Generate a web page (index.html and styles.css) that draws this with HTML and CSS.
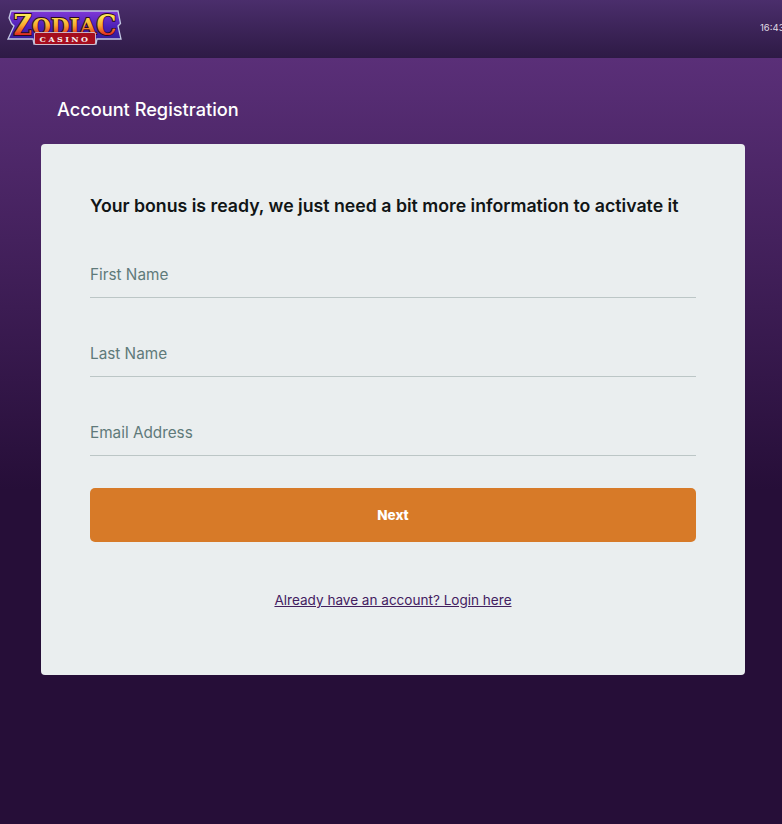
FILE: index.html
```html
<!DOCTYPE html>
<html lang="en">
<head>
    <meta charset="UTF-8">
    <meta name="viewport" content="width=device-width, initial-scale=1.0">
    <title>Account Registration</title>
    <link rel="stylesheet" href="styles.css">
</head>
<body>

    <header class="topbar">
        <svg class="logo" width="116" height="38" viewBox="0 0 116 38" aria-label="Zodiac Casino">
            <defs>
                <linearGradient id="gold" x1="0" y1="0" x2="0" y2="1">
                    <stop offset="0.2" stop-color="#fbe552"/>
                    <stop offset="0.5" stop-color="#f8a82e"/>
                    <stop offset="0.8" stop-color="#e22a20"/>
                </linearGradient>
                <linearGradient id="plate" x1="0" y1="0" x2="0" y2="1">
                    <stop offset="0" stop-color="#8038d8"/>
                    <stop offset="0.5" stop-color="#4a20b4"/>
                    <stop offset="1" stop-color="#2b1c8c"/>
                </linearGradient>
            </defs>
            <path d="M5 2H112L114.500 14.500L112 17L115 30H91L90 35H28L27 30H2L8 17L5.500 14.500L3 9Z" fill="url(#plate)" stroke="#c3c8e2" stroke-width="1.300"/>
            <text x="7.500" y="26" class="logo-word" textLength="103" lengthAdjust="spacingAndGlyphs" fill="url(#gold)" stroke="#2a0a20" stroke-width="1.800"><tspan font-size="27">Z</tspan><tspan font-size="23" dy="-1.500">ODIA</tspan><tspan font-size="27" dy="1.500">C</tspan></text>
            <rect x="28.500" y="23.500" width="61" height="12" rx="1.500" fill="#a50d1e" stroke="#d9d9e6" stroke-width="0.800"/>
            <text x="59" y="32.800" text-anchor="middle" class="logo-sub">CASINO</text>
        </svg>
        <span class="clock">16:43</span>
    </header>

    <main class="page">
        <h1>Account Registration</h1>

        <form class="card">
            <h2>Your bonus is ready, we just need a bit more information to activate it</h2>

            <div class="field">First Name</div>
            <div class="field">Last Name</div>
            <div class="field">Email Address</div>

            <button type="button" class="next">Next</button>

            <a class="login" href="#">Already have an account? Login here</a>
        </form>
    </main>

</body>
</html>
```

FILE: styles.css
```css
html, body {
    margin: 0;
    height: 100%;
}
body {
    font-family: Inter, "Liberation Sans", sans-serif;
    background-color: #260e38;
    overflow: hidden;
}
.topbar {
    height: 58px;
    box-sizing: border-box;
    padding: 9px 0 0 6px;
    display: flex;
    justify-content: space-between;
    background: linear-gradient(#4b2e6c, #2e1a45);
}
.logo-word {
    font-family: "DejaVu Serif", serif;
    font-weight: bold;
    paint-order: stroke;
}
.logo-sub {
    font-family: "DejaVu Serif", serif;
    font-size: 8px;
    font-weight: bold;
    letter-spacing: 2.400px;
    fill: #f4f0f0;
}
.clock {
    font-size: 9.500px;
    color: #e2dee6;
    line-height: 12px;
    margin-top: 13px;
    width: 22px;
    flex: none;
    overflow: hidden;
    white-space: nowrap;
}
.page {
    height: 766px;
    box-sizing: border-box;
    padding: 0 37px 0 41px;
    background: linear-gradient(#5a2f78 0, #260e38 432px);
}
h1 {
    margin: 0;
    padding: 39px 0 22px 16px;
    font-size: 18.200px;
    line-height: 25px;
    font-weight: 500;
    color: #fff;
}
.card {
    height: 531px;
    box-sizing: border-box;
    padding: 49px 49px 0;
    background-color: #eaeeef;
    border-radius: 4px;
    display: flex;
    flex-direction: column;
}
h2 {
    margin: 0 0 28px;
    font-size: 17.720px;
    line-height: 25px;
    font-weight: 600;
    color: #111516;
}
.field {
    height: 52px;
    box-sizing: border-box;
    padding-top: 18px;
    margin-bottom: 27px;
    font-size: 15.300px;
    line-height: 22px;
    color: #5f7a7a;
    border-bottom: 1px solid #bcc6c6;
}
.next {
    height: 54px;
    margin-top: 5px;
    padding: 0;
    border: none;
    border-radius: 5px;
    background-color: #d77a28;
    color: #fff;
    font-family: inherit;
    font-size: 13.500px;
    font-weight: 800;
}
.login {
    margin-top: 48px;
    text-align: center;
    font-size: 13.550px;
    line-height: 20px;
    color: #43205f;
}
```
